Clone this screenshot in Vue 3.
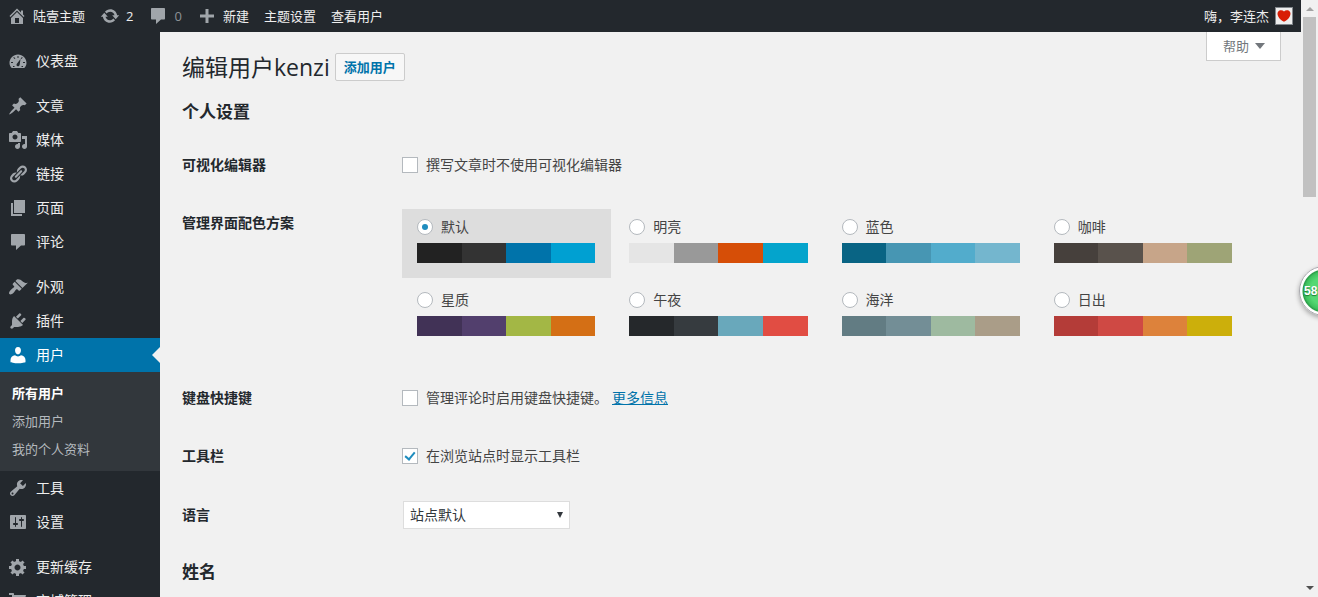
<script setup>
import { ref } from 'vue'

const icons = {
  home: 'M16 8.5l1.53 1.53-1.06 1.06L10 4.6l-6.47 6.49-1.06-1.06L10 2.5l4 4v-2h2v4zm-6-2.46l6 5.99V18H4v-5.97zM12 17v-5H8v5h4z',
  update: 'M10.2 3.28c3.53 0 6.43 2.61 6.92 6h2.08l-3.5 4-3.5-4h2.32c-.45-1.97-2.21-3.45-4.32-3.45-1.45 0-2.73.71-3.54 1.78L4.95 5.66C6.23 4.2 8.11 3.28 10.2 3.28zm-.4 13.44c-3.52 0-6.43-2.61-6.92-6H.8l3.5-4c1.17 1.33 2.33 2.67 3.5 4H5.48c.45 1.97 2.21 3.45 4.32 3.45 1.45 0 2.73-.71 3.54-1.78l1.71 1.95c-1.28 1.46-3.15 2.38-5.25 2.38z',
  comment: 'M4 2h12c.55 0 1 .45 1 1v9.500c0 .55-.45 1-1 1h-3L8 18v-4.500H4c-.55 0-1-.45-1-1V3c0-.55.45-1 1-1z',
  plus: 'M17 8.500v3h-5.500V17h-3v-5.500H3v-3h5.500V3h3v5.500z',
  dashboard: 'M3.760 17h12.480C17.600 15.630 18.500 13.890 18.500 12c0-4.700-3.800-8.500-8.500-8.500S1.500 7.300 1.500 12c0 1.890.900 3.630 2.260 5zM9.500 5h1v2h-1zM5.300 6.700l.7-.7 1.400 1.400-.7.7zM14 6l.7.7-1.400 1.400-.7-.7zM3 11h2v1H3zM15 11h2v1h-2zM12.500 8l-.8 5.400c-.2 1.300-1 2-2 1.800s-1.500-1.100-1-2.200zM5 15h1.500v1H5zM13.500 15H15v1h-1.500z',
  post: 'M10.44 3.02l1.82-1.82 6.36 6.35-1.83 1.82c-1.05-.68-2.48-.57-3.41.36l-.75.75c-.92.93-1.04 2.35-.35 3.41l-1.83 1.82-2.41-2.41-2.8 2.79c-.42.42-3.38 2.71-3.8 2.29s1.86-3.39 2.28-3.81l2.79-2.79L4.1 9.36l1.83-1.82c1.05.69 2.48.57 3.4-.36l.75-.75c.93-.92 1.05-2.35.36-3.41z',
  media: 'M13 11V4c0-.55-.45-1-1-1h-1.67L9 1H5L3.67 3H2c-.55 0-1 .45-1 1v7c0 .55.45 1 1 1h10c.55 0 1-.45 1-1zM7 4.5c1.38 0 2.5 1.12 2.5 2.5S8.38 9.5 7 9.5 4.5 8.38 4.5 7 5.62 4.5 7 4.5zM14 6h5v10.5c0 1.38-1.12 2.5-2.5 2.5S14 17.88 14 16.5s1.12-2.5 2.5-2.5c.17 0 .34.02.5.05V9h-3V6zm-4 8.05V13h2v3.5c0 1.38-1.12 2.5-2.5 2.5S7 17.88 7 16.5 8.12 14 9.5 14c.17 0 .34.02.5.05z',
  link: 'M17.74 2.76c1.68 1.69 1.68 4.41 0 6.1l-1.53 1.52c-1.12 1.12-2.7 1.47-4.14 1.09l2.62-2.61.76-.77.76-.76c.84-.84.84-2.2 0-3.04-.84-.85-2.2-.85-3.04 0l-.77.76-3.38 3.38c-.37-1.44-.02-3.02 1.1-4.14l1.52-1.53c1.69-1.68 4.42-1.68 6.1 0zM8.59 13.43l5.34-5.34c.42-.42.42-1.1 0-1.52-.44-.43-1.13-.39-1.53 0l-5.33 5.34c-.42.42-.42 1.1 0 1.52.44.43 1.13.39 1.52 0zm-.76 2.29l4.14-4.15c.38 1.44.03 3.02-1.09 4.14l-1.52 1.53c-1.69 1.68-4.41 1.68-6.1 0-1.68-1.68-1.68-4.42 0-6.1l1.53-1.52c1.12-1.12 2.7-1.47 4.14-1.1l-4.14 4.15c-.85.84-.85 2.2 0 3.05.84.84 2.2.84 3.04 0z',
  page: 'M6 15V2h11v13H6zm-1 1h9v2H3V5h2v11z',
  appearance: 'M14.48 11.06L7.41 3.99l1.5-1.5c.5-.56 2.3-.47 3.51.32 1.21.8 1.43 1.28 2.91 2.1 1.18.64 2.45 1.26 4.45.85zm-.71.71L6.7 4.7 4.93 6.47c-.39.39-.39 1.02 0 1.41l1.06 1.06c.39.39.39 1.03 0 1.42-.6.6-1.43 1.11-2.21 1.69-.35.26-.7.53-1.01.84C1.43 14.23.4 16.08 1.4 17.07c.99 1 2.84-.03 4.18-1.36.31-.31.58-.66.85-1.02.57-.78 1.08-1.61 1.69-2.21.39-.39 1.02-.39 1.41 0l1.06 1.06c.39.39 1.02.39 1.41 0z',
  plugin: 'M13.11 4.36L9.87 7.6 8 5.73l3.24-3.24c.35-.34 1.05-.2 1.56.32.52.51.66 1.21.31 1.55zm-8 1.77l.91-1.12 9.01 9.01-1.19.84c-.71.71-2.63 1.16-3.82 1.16H6.14L4.9 17.26c-.59.59-1.54.59-2.12 0-.59-.58-.59-1.53 0-2.12l1.24-1.24v-3.88c0-1.13.4-3.19 1.09-3.89zm7.26 3.97l3.24-3.24c.34-.35 1.04-.21 1.55.31.52.51.66 1.21.31 1.55l-3.24 3.25z',
  user: 'M10 9.25c-2.4 0-2.900-3.300-2.900-3.300C6.800 3.700 7.800 2 10 2s3.200 1.700 2.900 3.950c0 0-.5 3.300-2.900 3.300zM7 10.300c.8.700 1.800 1.100 3 1.100s2.200-.4 3-1.100c2.700.3 4.500 2.300 4.500 4.700v2.200S13.600 18.300 10 18.300 2.500 17.200 2.500 17.200V15c0-2.400 1.800-4.400 4.500-4.700z',
  tools: 'M16.68 9.77c-1.34 1.34-3.3 1.67-4.95.99l-5.41 6.52c-.99.99-2.59.99-3.58 0s-.99-2.59 0-3.57l6.52-5.42c-.68-1.65-.35-3.61.99-4.95 1.28-1.28 3.12-1.62 4.72-1.06l-2.89 2.89 2.82 2.82 2.86-2.87c.53 1.58.18 3.39-1.08 4.65zM3.81 16.21c.4.39 1.04.39 1.43 0 .4-.4.4-1.04 0-1.43-.39-.4-1.03-.4-1.43 0-.39.39-.39 1.03 0 1.43z',
  settings: 'M18 16V4c0-.55-.45-1-1-1H3c-.55 0-1 .45-1 1v12c0 .55.45 1 1 1h14c.55 0 1-.45 1-1zM8 11h1c.55 0 1 .45 1 1s-.45 1-1 1H8v1.5c0 .28-.22.5-.5.5s-.5-.22-.5-.5V13H6c-.55 0-1-.45-1-1s.45-1 1-1h1V5.5c0-.28.22-.5.5-.5s.5.22.5.5V11zm5-2h-1c-.55 0-1-.45-1-1s.45-1 1-1h1V5.5c0-.28.22-.5.5-.5s.5.22.5.5V7h1c.55 0 1 .45 1 1s-.45 1-1 1h-1v5.5c0 .28-.22.5-.5.5s-.5-.22-.5-.5V9z',
  gear: 'M18 12h-2.18c-.17.7-.44 1.35-.81 1.93l1.54 1.54-2.1 2.1-1.54-1.54c-.58.36-1.23.63-1.91.79V19H8v-2.18c-.68-.16-1.33-.43-1.91-.79l-1.54 1.54-2.12-2.12 1.54-1.54c-.36-.58-.63-1.23-.79-1.91H1V9.03h2.17c.16-.7.44-1.35.8-1.94L2.43 5.55l2.1-2.1 1.54 1.54c.58-.37 1.24-.64 1.93-.81V2h3v2.18c.68.16 1.33.43 1.91.79l1.54-1.54 2.12 2.12-1.54 1.54c.36.59.64 1.24.8 1.94H18V12zm-8.5 1.5c1.66 0 3-1.34 3-3s-1.34-3-3-3-3 1.34-3 3 1.34 3 3 3z',
  cart: 'M1 2h4c.55 0 1 .45 1 1v1h12l-2 8H6v1h10v2H5c-.55 0-1-.45-1-1V4H1z',
  heart: 'M10 17.12c3.33-1.4 5.74-3.79 7.04-6.21 1.28-2.41 1.46-4.81.32-6.25-1.03-1.29-2.37-1.78-3.73-1.74s-2.68.63-3.63 1.46c-.95-.83-2.27-1.42-3.63-1.46s-2.7.45-3.73 1.74c-1.14 1.44-.96 3.84.34 6.25 1.28 2.42 3.69 4.81 7.02 6.21z'
}

const barLinks = [
  { icon: 'home', text: '陆壹主题' },
  { icon: 'update', text: '2' },
  { icon: 'comment', text: '0', dim: true },
  { icon: 'plus', text: '新建' },
  { text: '主题设置' },
  { text: '查看用户' }
]

const menuGroups = [
  [{ icon: 'dashboard', text: '仪表盘' }],
  [
    { icon: 'post', text: '文章' },
    { icon: 'media', text: '媒体' },
    { icon: 'link', text: '链接' },
    { icon: 'page', text: '页面' },
    { icon: 'comment', text: '评论' }
  ],
  [
    { icon: 'appearance', text: '外观' },
    { icon: 'plugin', text: '插件' },
    { icon: 'user', text: '用户', children: ['所有用户', '添加用户', '我的个人资料'] },
    { icon: 'tools', text: '工具' },
    { icon: 'settings', text: '设置' }
  ],
  [
    { icon: 'gear', text: '更新缓存' },
    { icon: 'cart', text: '商城管理' }
  ]
]

const schemes = [
  { id: 'fresh', name: '默认', colors: ['#222222', '#333333', '#0073aa', '#00a0d2'] },
  { id: 'light', name: '明亮', colors: ['#e5e5e5', '#999999', '#d64e07', '#04a4cc'] },
  { id: 'blue', name: '蓝色', colors: ['#096484', '#4796b3', '#52accc', '#74b6ce'] },
  { id: 'coffee', name: '咖啡', colors: ['#46403c', '#59524c', '#c7a589', '#9ea476'] },
  { id: 'ectoplasm', name: '星质', colors: ['#413256', '#523f6d', '#a3b745', '#d46f15'] },
  { id: 'midnight', name: '午夜', colors: ['#25282b', '#363b3f', '#69a8bb', '#e14d43'] },
  { id: 'ocean', name: '海洋', colors: ['#627c83', '#738e96', '#9ebaa0', '#aa9d88'] },
  { id: 'sunrise', name: '日出', colors: ['#b43c38', '#cf4944', '#dd823b', '#ccaf0b'] }
]

const scheme = ref('fresh')
const plainEditor = ref(false)
const shortcuts = ref(false)
const toolbar = ref(true)
const locale = ref('site')
</script>

<template>
  <div class="window">
    <div class="page">
      <header class="bar">
        <nav class="bar-links">
          <a v-for="item in barLinks" :key="item.text" href="#" class="bar-link">
            <svg v-if="item.icon" class="icon" viewBox="0 0 20 20" aria-hidden="true"><path fill-rule="evenodd" :d="icons[item.icon]" /></svg>
            <span :class="{ dim: item.dim }">{{ item.text }}</span>
          </a>
        </nav>
        <a href="#" class="account">
          <span>嗨，李连杰</span>
          <span class="avatar"><svg viewBox="0 0 20 20" aria-hidden="true"><path :d="icons.heart" /></svg></span>
        </a>
      </header>

      <div class="body">
        <nav class="menu">
          <ul v-for="(group, g) in menuGroups" :key="g" class="group">
            <li v-for="item in group" :key="item.text">
              <a href="#" class="menu-link" :class="{ current: item.children }">
                <svg class="icon" viewBox="0 0 20 20" aria-hidden="true"><path fill-rule="evenodd" :d="icons[item.icon]" /></svg>
                <span>{{ item.text }}</span>
              </a>
              <ul v-if="item.children" class="submenu">
                <li v-for="(child, c) in item.children" :key="child">
                  <a href="#" class="sub-link" :class="{ active: c === 0 }">{{ child }}</a>
                </li>
              </ul>
            </li>
          </ul>
        </nav>

        <main class="content">
          <button type="button" class="help">帮助<span class="triangle"></span></button>
          <div class="heading">
            <h1>编辑用户kenzi</h1>
            <a href="#" class="add">添加用户</a>
          </div>

          <h2>个人设置</h2>
          <form class="form" @submit.prevent>
            <div class="row">
              <span class="label">可视化编辑器</span>
              <label class="choice"><input v-model="plainEditor" type="checkbox" class="check" />撰写文章时不使用可视化编辑器</label>
            </div>
            <div class="row">
              <span id="scheme-label" class="label">管理界面配色方案</span>
              <div class="schemes" role="radiogroup" aria-labelledby="scheme-label">
                <label v-for="s in schemes" :key="s.id" class="scheme" :class="{ selected: scheme === s.id }">
                  <span class="choice"><input v-model="scheme" type="radio" name="scheme" class="radio" :value="s.id" />{{ s.name }}</span>
                  <span class="palette">
                    <span v-for="c in s.colors" :key="c" class="swatch" :style="{ backgroundColor: c }"></span>
                  </span>
                </label>
              </div>
            </div>
            <div class="row">
              <span class="label">键盘快捷键</span>
              <div class="inline">
                <label class="choice"><input v-model="shortcuts" type="checkbox" class="check" />管理评论时启用键盘快捷键。</label>
                <a href="#" class="more">更多信息</a>
              </div>
            </div>
            <div class="row">
              <span class="label">工具栏</span>
              <label class="choice"><input v-model="toolbar" type="checkbox" class="check" />在浏览站点时显示工具栏</label>
            </div>
            <div class="row centered">
              <label class="label" for="locale">语言</label>
              <div class="select-wrap">
                <select id="locale" v-model="locale">
                  <option value="site">站点默认</option>
                </select>
              </div>
            </div>
          </form>
          <h2>姓名</h2>
        </main>
      </div>
    </div>

    <div class="scrollbar" aria-hidden="true">
      <span class="arrow up"></span>
      <span class="thumb"></span>
      <span class="arrow down"></span>
    </div>
    <div class="meter">58</div>
  </div>
</template>

<style>
body {
  background: #f1f1f1;
}
</style>

<style scoped>
* {
  box-sizing: border-box;
}

.window {
  position: relative;
  display: flex;
  height: 100vh;
  overflow: hidden;
  background: #f1f1f1;
  color: #444;
  font: 14px/18px "Open Sans", "Noto Sans CJK SC", sans-serif;
}

.page {
  flex: 1;
  min-width: 0;
  display: flex;
  flex-direction: column;
}

a {
  color: inherit;
  text-decoration: none;
}

ul {
  list-style: none;
  margin: 0;
  padding: 0;
}

.icon {
  width: 20px;
  height: 20px;
  flex: none;
  fill: #a0a5aa;
}

.bar {
  flex: none;
  display: flex;
  justify-content: space-between;
  height: 32px;
  padding: 0 8px 0 7px;
  background: #23282d;
  color: #eee;
  font-size: 13px;
}

.bar-links {
  display: flex;
  gap: 15px;
}

.bar-link {
  display: flex;
  align-items: center;
  gap: 6px;
}

.bar-link .dim {
  color: #8c9196;
}

.account {
  display: flex;
  align-items: center;
  gap: 6px;
}

.avatar {
  display: flex;
  width: 18px;
  height: 18px;
  border: 1px solid #82878c;
  background: #eee;
}

.avatar svg {
  width: 16px;
  height: 16px;
  fill: #d81e06;
}

.body {
  flex: 1;
  min-height: 0;
  display: flex;
}

.menu {
  width: 160px;
  flex: none;
  padding-top: 12px;
  overflow: hidden;
  background: #23282d;
  color: #eee;
}

.group {
  margin-bottom: 11px;
}

.menu-link {
  position: relative;
  display: flex;
  align-items: center;
  gap: 8px;
  height: 34px;
  padding-left: 8px;
}

.menu-link.current {
  background: #0073aa;
  color: #fff;
}

.menu-link.current .icon {
  fill: #fff;
}

.menu-link.current::after {
  content: "";
  position: absolute;
  top: 9px;
  right: 0;
  border: 8px solid transparent;
  border-left: 0;
  border-right-color: #f1f1f1;
}

.submenu {
  padding: 7px 0 8px;
  background: #32373c;
}

.sub-link {
  display: block;
  padding: 5px 12px;
  color: #b4b9be;
  font-size: 13px;
}

.sub-link.active {
  color: #fff;
  font-weight: 700;
}

.content {
  position: relative;
  flex: 1;
  min-width: 0;
  padding: 20px 53px 0 22px;
}

.help {
  position: absolute;
  top: 0;
  right: 20px;
  display: flex;
  align-items: center;
  gap: 6px;
  height: 29px;
  padding: 0 15px 0 16px;
  border: 1px solid #ccc;
  border-top: 0;
  background: #fff;
  color: #72777c;
  font: 13px/18px "Open Sans", "Noto Sans CJK SC", sans-serif;
}

.triangle {
  border: 5px solid transparent;
  border-top: 6px solid #72777c;
  border-bottom: 0;
}

.heading {
  display: flex;
  align-items: center;
  gap: 5px;
}

h1 {
  margin: 0;
  color: #23282d;
  font-size: 23px;
  font-weight: 400;
  line-height: 30px;
}

.add {
  padding: 4px 8px;
  border: 1px solid #ccc;
  border-radius: 2px;
  background: #f7f7f7;
  color: #0073aa;
  font-size: 13px;
  font-weight: 600;
}

h2 {
  margin: 18px 0 12px;
  color: #23282d;
  font-size: 17px;
  font-weight: 700;
  line-height: 24px;
}

.row {
  display: grid;
  grid-template-columns: 220px 1fr;
  align-items: start;
}

.row.centered {
  align-items: center;
}

.label {
  padding: 20px 0;
  color: #23282d;
  font-weight: 600;
}

.choice {
  display: flex;
  align-items: center;
  gap: 8px;
}

.row > .choice,
.inline {
  padding: 20px 0;
}

.inline {
  display: flex;
  align-items: center;
  gap: 4px;
}

.more {
  color: #0073aa;
  text-decoration: underline;
}

.check,
.radio {
  appearance: none;
  flex: none;
  width: 16px;
  height: 16px;
  margin: 0;
  border: 1px solid #b4b9be;
  background: #fff;
}

.check:checked::before {
  content: "";
  display: block;
  width: 4px;
  height: 8px;
  margin: 1px 0 0 4px;
  border: solid #1e8cbe;
  border-width: 0 2px 2px 0;
  transform: rotate(40deg);
}

.radio {
  border-radius: 50%;
}

.radio:checked::before {
  content: "";
  display: block;
  width: 6px;
  height: 6px;
  margin: 4px;
  border-radius: 50%;
  background: #1e8cbe;
}

.schemes {
  display: grid;
  grid-template-columns: repeat(4, 1fr);
  gap: 4px 3px;
  padding: 15px 0 18px;
}

.scheme {
  display: flex;
  flex-direction: column;
  gap: 7px;
  padding: 9px 16px 15px 15px;
}

.scheme.selected {
  background: #ddd;
}

.palette {
  display: flex;
  height: 20px;
}

.swatch {
  flex: 1;
}

.select-wrap {
  position: relative;
  justify-self: start;
  margin: 16px 0 16px 1px;
}

.select-wrap::after {
  content: "";
  position: absolute;
  top: 11px;
  right: 7px;
  border: 3px solid transparent;
  border-top: 6px solid #32373c;
  border-bottom: 0;
  pointer-events: none;
}

select {
  appearance: none;
  display: block;
  width: 167px;
  height: 28px;
  padding: 0 6px;
  border: 1px solid #ddd;
  border-radius: 0;
  background: #fff;
  color: #32373c;
  font: 14px/18px "Open Sans", "Noto Sans CJK SC", sans-serif;
}

.form + h2 {
  margin-top: 15px;
}

.scrollbar {
  flex: none;
  display: flex;
  flex-direction: column;
  align-items: center;
  width: 17px;
  padding: 7px 0;
  background: #f1f1f1;
}

.arrow {
  border: 4px solid transparent;
}

.up {
  border-top: 0;
  border-bottom-color: #a3a3a3;
}

.down {
  margin-top: auto;
  border-bottom: 0;
  border-top-color: #505050;
}

.thumb {
  width: 13px;
  height: 180px;
  margin-top: 6px;
  background: #c1c1c1;
}

.meter {
  position: absolute;
  top: 266px;
  right: -31px;
  width: 50px;
  height: 50px;
  padding-left: 4px;
  border: 1px solid #a9a9ae;
  border-radius: 50%;
  background: radial-gradient(circle, #55d873 0 14px, #3fc25e 19px, #2b9c48 21px, #fff 22px);
  box-shadow: 0 2px 5px #0005;
  color: #fff;
  font: 700 12px/48px "Liberation Sans", sans-serif;
  text-shadow: 0 1px 1px #1b7a34;
}
</style>
